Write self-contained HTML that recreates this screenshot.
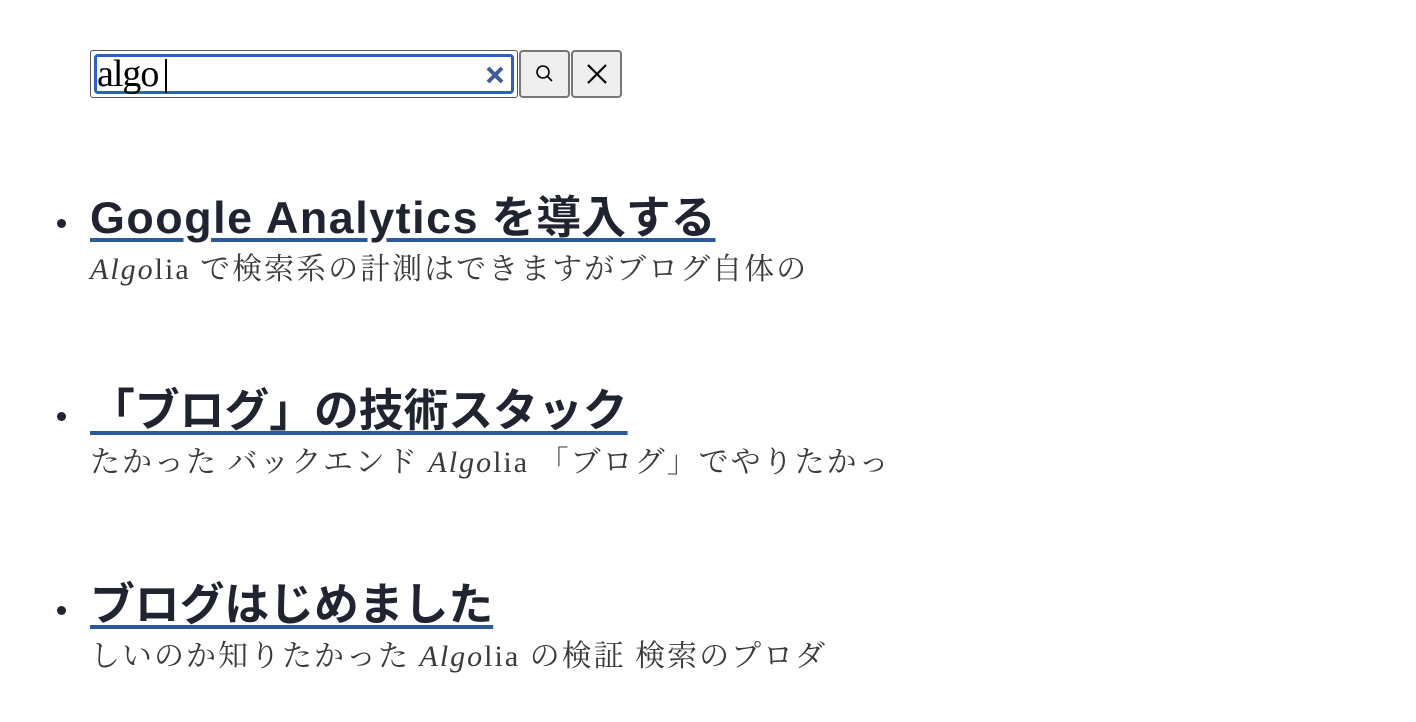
<!DOCTYPE html>
<html><head><meta charset="utf-8"><style>
body{margin:0;background:#fff;font-family:"Liberation Serif","Noto Serif CJK JP",serif;}
.bar{position:absolute;left:90px;top:50px;display:flex;}
.inp{border:1px solid #555;border-radius:3px;position:relative;box-sizing:border-box;width:428px;height:48px;}
.inner{position:absolute;left:3px;top:3px;right:3px;bottom:3px;border:3px solid #2a62c4;border-radius:4px;}
.txt{position:absolute;left:0px;top:-5px;font-size:38px;color:#000;letter-spacing:-1px;}
.caret{position:absolute;left:68px;top:2px;width:2px;height:34px;background:#000;}
.btn{width:51px;height:48px;box-sizing:border-box;border:2px solid #777;border-radius:4px;background:#efefef;margin-left:1px;display:flex;align-items:center;justify-content:center;}
ul{position:absolute;left:0;top:0;margin:0;padding:0;list-style:none;}
li{position:absolute;left:90px;}
.dot{position:absolute;left:-33px;width:9px;height:9px;border-radius:50%;background:#1f2430;}
.t{font-family:"Liberation Sans","Noto Sans CJK JP",sans-serif;font-weight:bold;font-size:44.8px;color:#1f2430;text-decoration:underline;text-decoration-color:#2a5a9a;text-decoration-thickness:4px;text-underline-offset:5px;white-space:nowrap;line-height:52px;}
.t .l{letter-spacing:1.55px;}
.d{font-family:"Liberation Serif","Noto Serif CJK JP",serif;font-size:30px;letter-spacing:2px;color:#3a3a3a;white-space:nowrap;line-height:40px;margin-top:6px;}
.d i{font-style:italic;}
</style></head><body>
<div class="bar">
<div class="inp"><div class="inner"><span class="txt">algo</span><div class="caret"></div>
<svg style="position:absolute;right:6px;top:8px" width="20" height="20" viewBox="0 0 20 20"><path d="M3 3L17 17M17 3L3 17" stroke="#3f5d9a" stroke-width="4"/></svg></div></div>
<div class="btn"><svg width="22" height="22" viewBox="0 0 22 22"><circle cx="9" cy="9" r="6" fill="none" stroke="#000" stroke-width="1.6"/><path d="M13.5 13.5L18 18" stroke="#000" stroke-width="1.6"/></svg></div>
<div class="btn"><svg width="24" height="24" viewBox="0 0 24 24"><path d="M3 3L21 21M21 3L3 21" stroke="#000" stroke-width="2.2"/></svg></div>
</div>
<ul>
<li style="top:192px"><div class="dot" style="top:27px"></div><div class="t"><span class="l">Google Analytics</span> を導入する</div><div class="d"><i>Algo</i>lia で検索系の計測はできますがブログ自体の</div></li>
<li style="top:385px"><div class="dot" style="top:27px"></div><div class="t">「ブログ」の技術スタック</div><div class="d">たかった バックエンド <i>Algo</i>lia 「ブログ」でやりたかっ</div></li>
<li style="top:579px"><div class="dot" style="top:27px"></div><div class="t">ブログはじめました</div><div class="d">しいのか知りたかった <i>Algo</i>lia の検証 検索のプロダ</div></li>
</ul>
</body></html>
